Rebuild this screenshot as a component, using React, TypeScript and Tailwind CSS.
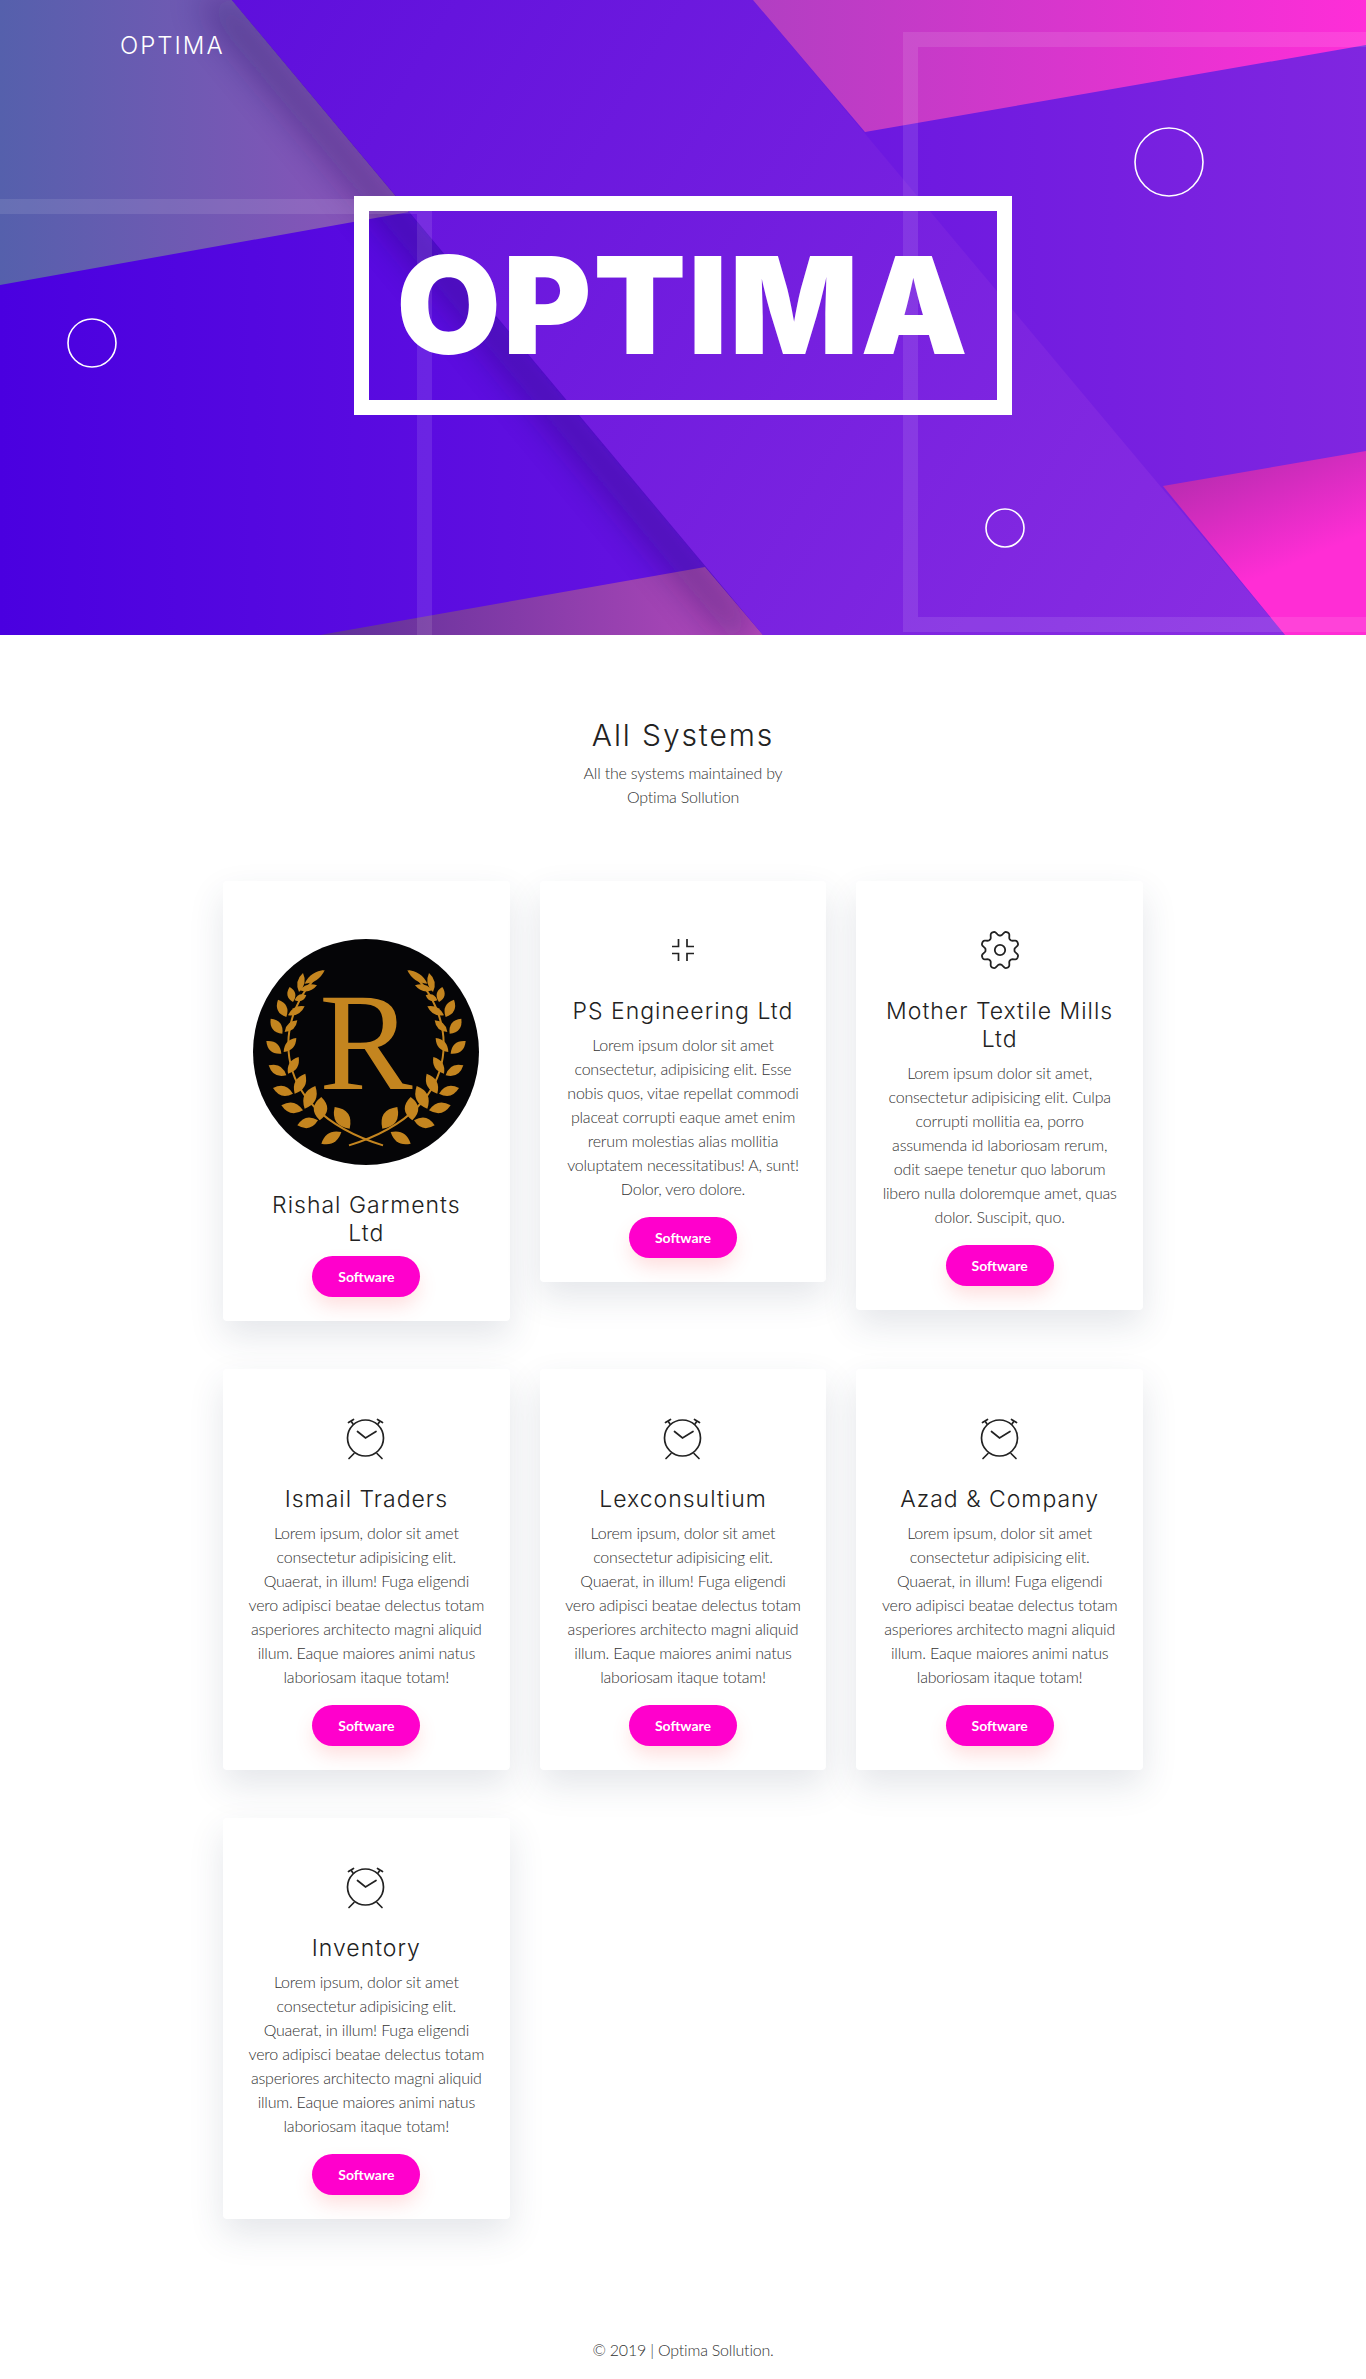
const cards = [
  {
    title: "PS Engineering Ltd",
    icon: "compress",
    text: "Lorem ipsum dolor sit amet consectetur, adipisicing elit. Esse nobis quos, vitae repellat commodi placeat corrupti eaque amet enim rerum molestias alias mollitia voluptatem necessitatibus! A, sunt! Dolor, vero dolore.",
  },
  {
    title: "Mother Textile Mills Ltd",
    icon: "gear",
    text: "Lorem ipsum dolor sit amet, consectetur adipisicing elit. Culpa corrupti mollitia ea, porro assumenda id laboriosam rerum, odit saepe tenetur quo laborum libero nulla doloremque amet, quas dolor. Suscipit, quo.",
  },
];

const clockText =
  "Lorem ipsum, dolor sit amet consectetur adipisicing elit. Quaerat, in illum! Fuga eligendi\nvero adipisci beatae delectus totam asperiores architecto magni aliquid illum. Eaque maiores animi natus laboriosam itaque totam!";

const clockCards = ["Ismail Traders", "Lexconsultium", "Azad & Company", "Inventory"];

// base -> tip, traced off the left branch of the badge
const leaves: [number, number, number, number, number][] = [
  [200, 190, 260, 150, 9],
  [183, 215, 195, 158, 9],
  [185, 210, 237, 195, 8],
  [165, 245, 155, 200, 10],
  [170, 240, 205, 225, 8],
  [145, 290, 120, 238, 12],
  [150, 285, 200, 258, 9],
  [133, 340, 98, 295, 12],
  [140, 335, 178, 300, 9],
  [130, 400, 85, 362, 12],
  [137, 395, 175, 353, 10],
  [145, 465, 92, 435, 12],
  [150, 460, 182, 410, 11],
  [165, 520, 105, 503, 12],
  [170, 520, 202, 460, 13],
  [195, 570, 130, 555, 13],
  [200, 565, 232, 497, 15],
  [240, 600, 178, 615, 13],
  [245, 600, 250, 530, 17],
  [310, 635, 250, 670, 13],
  [335, 625, 290, 560, 18],
];

function leafPath([bx, by, tx, ty, w]: [number, number, number, number, number]) {
  const mx = (bx + tx) / 2;
  const my = (by + ty) / 2;
  const dx = tx - bx;
  const dy = ty - by;
  const len = Math.hypot(dx, dy);
  const nx = (-dy / len) * w * 2.4;
  const ny = (dx / len) * w * 2.4;
  return `M${bx} ${by}Q${mx + nx} ${my + ny} ${tx} ${ty}Q${mx - nx} ${my - ny} ${bx} ${by}Z`;
}

function gearPath() {
  let d = "";
  for (let i = 0; i < 160; i++) {
    const a = (i / 160) * Math.PI * 2;
    const r = 16.8 + 2.6 * Math.cos(8 * a + Math.PI) - 0.3 * Math.cos(24 * a + Math.PI);
    d += `${i ? "L" : "M"}${(24 + r * Math.sin(a)).toFixed(2)} ${(24 - r * Math.cos(a)).toFixed(2)}`;
  }
  return d + "Z";
}

function CompressIcon() {
  return (
    <svg width="48" height="48" viewBox="0 0 48 48" fill="none" stroke="#222" strokeWidth="1.7" aria-hidden>
      <path d="M13 20.5h6.5V13M35 20.5h-7V13M13 27.5h6.5V35M35 27.5h-7V35" />
    </svg>
  );
}

function GearIcon() {
  return (
    <svg width="48" height="48" viewBox="0 0 48 48" fill="none" stroke="#222" strokeWidth="1.8" aria-hidden>
      <path d={gearPath()} />
      <circle cx="24" cy="24" r="5.2" />
    </svg>
  );
}

function ClockIcon() {
  return (
    <svg width="48" height="48" viewBox="0 0 48 48" fill="none" stroke="#222" strokeWidth="1.7" strokeLinecap="round" aria-hidden>
      <circle cx="23.5" cy="24" r="18" />
      <path d="M15.5 17.5l8 6.5 10.5-6.5" />
      <path d="M6.5 8.5l5-3M9 7l2 3M40.5 8.5l-5-3M38 7l-2 3M7 44.5l5-5M40 44.5l-5-5" />
    </svg>
  );
}

function RishalBadge() {
  return (
    <svg width="226" height="226" viewBox="45 56 678 678" className="block" aria-hidden>
      <circle cx="384" cy="395" r="339" fill="#050507" />
      {[0, 1].map((side) => (
        <g key={side} transform={side ? "translate(768 0) scale(-1 1)" : undefined} fill="#c4851f">
          <path d="M255 152C120 260 60 560 435 675" fill="none" stroke="#c4851f" strokeWidth="6" />
          {leaves.map((l, i) => (
            <path key={i} d={leafPath(l)} />
          ))}
        </g>
      ))}
      <text
        x="384"
        y="505"
        textAnchor="middle"
        fill="#c4851f"
        fontSize="420"
        fontFamily="'Liberation Serif', serif"
      >
        R
      </text>
    </svg>
  );
}

function SoftwareButton() {
  return (
    <a className="mx-auto flex h-[41px] w-[108px] items-center justify-center rounded-full bg-[#ff00cc] text-sm font-bold text-white shadow-[0_10px_20px_-2px_rgba(255,80,80,0.2)]">
      Software
    </a>
  );
}

function HeroBackground() {
  return (
    <svg className="absolute inset-0 h-full w-full" viewBox="0 0 1366 635" preserveAspectRatio="none" aria-hidden>
      <defs>
        <linearGradient id="base" x1="0" x2="1">
          <stop offset="0" stopColor="#4a00e0" />
          <stop offset="1" stopColor="#8026e0" />
        </linearGradient>
        <linearGradient id="band" gradientUnits="userSpaceOnUse" x1="232" y1="0" x2="1285" y2="635">
          <stop offset="0" stopColor="#5e0fdc" />
          <stop offset="1" stopColor="#8a2ee2" />
        </linearGradient>
        <linearGradient id="topLeft" x1="0" x2="1">
          <stop offset="0" stopColor="#5560ac" />
          <stop offset="1" stopColor="#8f52bb" />
        </linearGradient>
        <linearGradient id="topRight" x1="0" x2="1">
          <stop offset="0" stopColor="#b13fc2" />
          <stop offset="1" stopColor="#ff2dd8" />
        </linearGradient>
        <linearGradient id="lowRight" x1="0" y1="0" x2="0.35" y2="0.75">
          <stop offset="0" stopColor="#a82ba8" />
          <stop offset="1" stopColor="#ff2dd5" />
        </linearGradient>
        <linearGradient id="lowMid" x1="0" x2="1">
          <stop offset="0" stopColor="#5c2f98" />
          <stop offset="1" stopColor="#b64abc" />
        </linearGradient>
        <filter id="soft" x="-30%" y="-30%" width="160%" height="160%">
          <feGaussianBlur stdDeviation="18" />
        </filter>
      </defs>
      <rect width="1366" height="635" fill="url(#base)" />
      <polygon points="0,0 232,0 409,212 0,285" fill="url(#topLeft)" />
      <polygon points="320,635 705,567 763,635" fill="url(#lowMid)" />
      <polygon points="232,0 763,635 728,635 197,0" fill="#1c0a5c" opacity="0.45" filter="url(#soft)" />
      <polygon points="232,0 753,0 1285,635 763,635" fill="url(#band)" />
      <polygon points="753,0 1366,0 1366,45 865,132" fill="url(#topRight)" />
      <polygon points="1163,486 1366,451 1366,635 1285,635" fill="url(#lowRight)" />
      <path d="M0 199H432V635H417V214H0Z" fill="#fff" opacity="0.1" />
      <path d="M1366 32H903V632H1366V617H918V47H1366Z" fill="#fff" opacity="0.1" />
      <g fill="none" stroke="#fff" strokeWidth="1.6">
        <circle cx="1169" cy="162" r="34" />
        <circle cx="92" cy="343" r="24" />
        <circle cx="1005" cy="528" r="19" />
      </g>
    </svg>
  );
}

function Card({ title, text, icon }: { title: string; text: string; icon: string }) {
  return (
    <div className="rounded bg-white px-6 pb-6 pt-[45px] text-center shadow-[0_15px_35px_rgba(50,60,90,0.13)]">
      <div className="flex justify-center">
        {icon === "compress" ? <CompressIcon /> : icon === "gear" ? <GearIcon /> : <ClockIcon />}
      </div>
      <h3 className="mt-[23px] font-['Inter',sans-serif] text-[23px] leading-7 font-light tracking-[1px] text-[#222]">
        {title}
      </h3>
      <p className="mt-[8px] mb-[16px] whitespace-pre-line text-base leading-6 font-light tracking-[-0.2px] text-[#333]">
        {text}
      </p>
      <SoftwareButton />
    </div>
  );
}

export default function App() {
  return (
    <div className="flex min-h-[2379px] flex-col bg-white font-['Lato',sans-serif]">
      <header className="relative h-[635px] overflow-hidden">
        <HeroBackground />
        <div className="relative flex flex-col">
          <div className="h-[196px] pl-[120px] pt-[30px] font-['Inter',sans-serif] text-2xl font-light tracking-[2px] text-white">
            OPTIMA
          </div>
          <div className="mx-auto flex h-[219px] w-[658px] items-center justify-center border-[15px] border-white">
            <h1 className="font-['Inter',sans-serif] text-[135px] leading-none font-black tracking-[2px] text-white">
              OPTIMA
            </h1>
          </div>
        </div>
      </header>

      <section className="pt-[82px] text-center">
        <h2 className="font-['Inter',sans-serif] text-3xl leading-9 font-light tracking-[1.9px] text-[#222]">
          All Systems
        </h2>
        <p className="mt-[8px] text-base leading-6 font-light tracking-[-0.2px] text-[#333]">
          All the systems maintained by
          <br />
          Optima Sollution
        </p>
      </section>

      <main className="mx-auto mt-[72px] grid w-[920px] grid-cols-3 items-start gap-x-[30px] gap-y-12">
        <div className="rounded bg-white px-6 pb-6 pt-[58px] text-center shadow-[0_15px_35px_rgba(50,60,90,0.13)]">
          <div className="flex justify-center">
            <RishalBadge />
          </div>
          <h3 className="mt-[26px] font-['Inter',sans-serif] text-[23px] leading-7 font-light tracking-[1px] text-[#222]">
            Rishal Garments
            <br />
            Ltd
          </h3>
          <div className="mt-[9px]">
            <SoftwareButton />
          </div>
        </div>
        {cards.map((c) => (
          <Card key={c.title} {...c} />
        ))}
        {clockCards.map((t) => (
          <Card key={t} title={t} text={clockText} icon="clock" />
        ))}
      </main>

      <footer className="mt-auto pb-[17px] text-center text-base leading-6 font-light tracking-[-0.2px] text-[#333]">
        © 2019 | Optima Sollution.
      </footer>
    </div>
  );
}
